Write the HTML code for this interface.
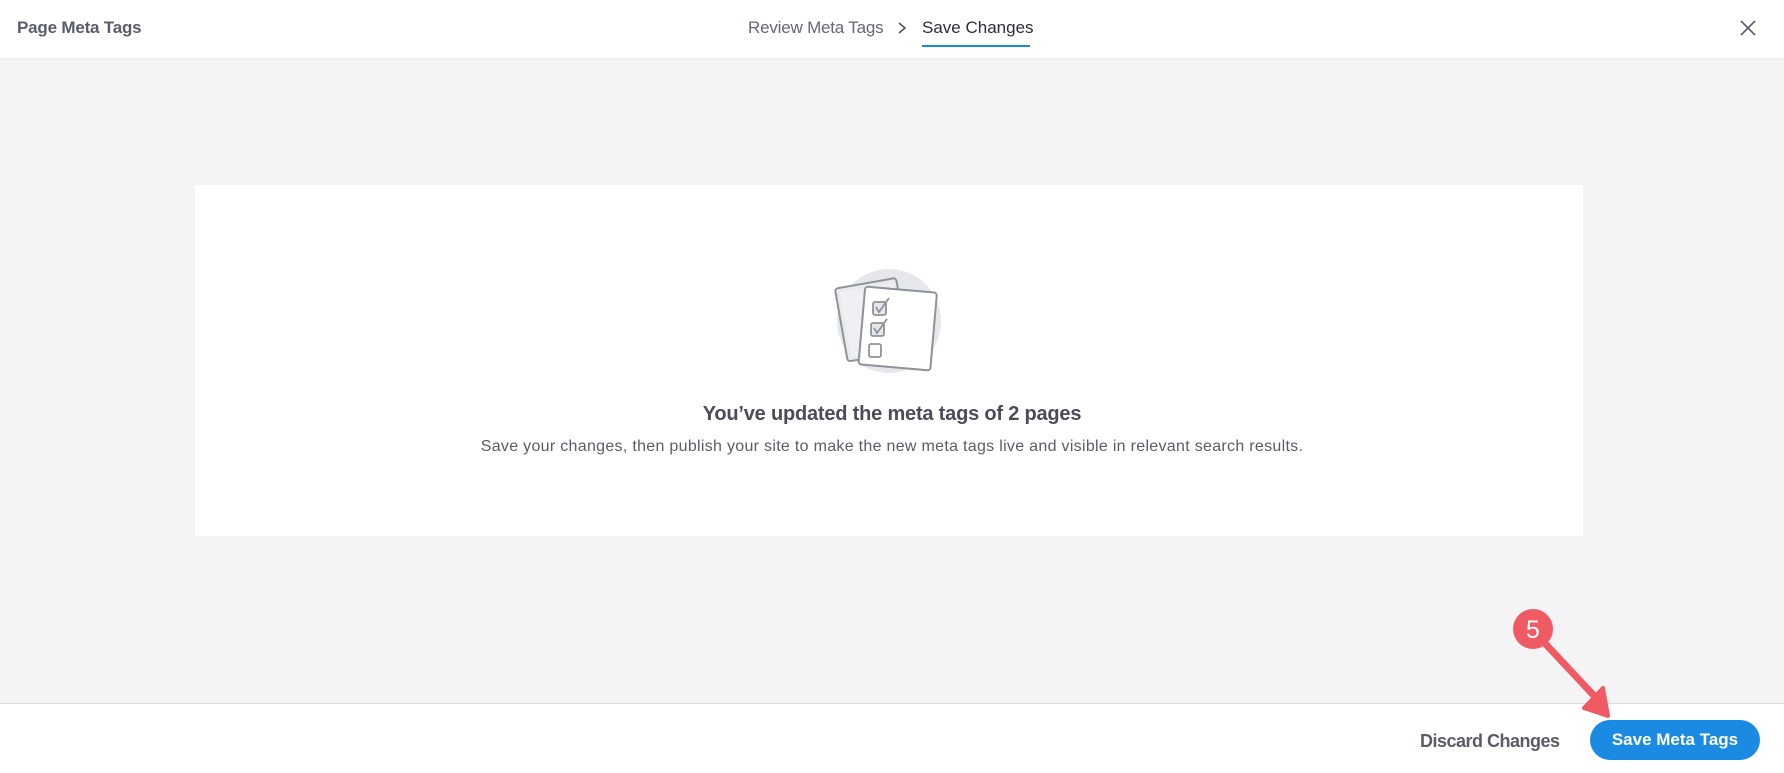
<!DOCTYPE html>
<html><head><meta charset="utf-8"><style>
*{margin:0;padding:0;box-sizing:border-box}
body{width:1784px;height:773px;background:#f4f4f6;font-family:"Liberation Sans",sans-serif;position:relative;overflow:hidden;color:#3b3d4a}
.hdr{position:absolute;left:0;top:0;width:1784px;height:59px;background:#fff;border-bottom:1px solid #ececee}
.t{position:absolute;white-space:nowrap}
.card{position:absolute;left:195px;top:185px;width:1388px;height:351px;background:#fff}
.ftr{position:absolute;left:0;top:703px;width:1784px;height:70px;background:#fff;border-top:1px solid #dcdcdf}
.btn{position:absolute;left:1590px;top:720px;width:170px;height:40px;border-radius:20px;background:#1a8ae3;color:#fff;font-weight:bold;font-size:17px;text-align:center;line-height:40px}
</style></head><body>
<div class="hdr"></div>
<div class="t" style="left:17px;top:18px;font-size:17px;color:#5a5d6b;font-weight:bold;letter-spacing:-0.2px">Page Meta Tags</div>
<div class="t" style="left:748px;top:18px;font-size:17px;color:#656877;letter-spacing:-0.2px">Review Meta Tags</div>
<svg style="position:absolute;left:896px;top:20px" width="12" height="16"><path d="M3 3 L9 8 L3 13" fill="none" stroke="#555" stroke-width="1.6"/></svg>
<div class="t" style="left:922px;top:18px;font-size:17px;color:#2c2e38">Save Changes</div>
<div style="position:absolute;left:922px;top:45px;width:108px;height:2px;background:#1a8ae3"></div>
<svg style="position:absolute;left:1738px;top:18px" width="20" height="20"><path d="M3 3 L17 17 M17 3 L3 17" stroke="#5a5d6a" stroke-width="1.6"/></svg>

<div class="card"></div>
<svg style="position:absolute;left:830px;top:265px" width="120" height="115" viewBox="0 0 120 115">
<circle cx="59" cy="56" r="52" fill="#e5e7ea"/>
<g transform="rotate(-10 40 50)"><rect x="10" y="18" width="62" height="74" rx="3" fill="#e8eaed" stroke="#8d9399" stroke-width="2"/><rect x="14" y="22" width="54" height="66" fill="#eef0f2"/></g>
<g transform="rotate(5 62 60)"><rect x="32" y="24" width="72" height="78" rx="3" fill="#fff" stroke="#8d9399" stroke-width="2"/></g>
<rect x="43" y="37" width="13" height="13" rx="2" fill="#e5e7ea" stroke="#8d9399" stroke-width="1.8"/>
<path d="M46 42 L49 47 L59 33" fill="none" stroke="#8d9399" stroke-width="1.8"/>
<rect x="41" y="58" width="13" height="13" rx="2" fill="#e5e7ea" stroke="#8d9399" stroke-width="1.8"/>
<path d="M44 63 L47 68 L57 54" fill="none" stroke="#8d9399" stroke-width="1.8"/>
<rect x="39" y="79" width="12" height="13" rx="2" fill="#fff" stroke="#8d9399" stroke-width="1.8"/>
</svg>
<div class="t" style="left:0;width:1784px;text-align:center;top:403px;font-size:20px;font-weight:bold;color:#4a4c58;letter-spacing:-0.2px">You’ve updated the meta tags of 2 pages</div>
<div class="t" style="left:0;width:1784px;text-align:center;top:438px;font-size:16px;color:#5a5c68;letter-spacing:0.3px">Save your changes, then publish your site to make the new meta tags live and visible in relevant search results.</div>

<div class="ftr"></div>
<div class="t" style="left:1420px;top:731px;font-size:18px;color:#5a5c68;font-weight:bold;letter-spacing:-0.5px">Discard Changes</div>
<div class="btn">Save Meta Tags</div>
<svg style="position:absolute;left:1500px;top:600px" width="130" height="125">
<path d="M40 38 L98 100" stroke="#f05a63" stroke-width="7" stroke-linecap="round"/>
<path d="M84 108 L108 116 L103 88 Z" fill="#f05a63" stroke="#f05a63" stroke-width="4" stroke-linejoin="round"/>
<circle cx="33" cy="29" r="20" fill="#f05a63"/>
<text x="33" y="38" text-anchor="middle" font-family="Liberation Sans" font-size="25" fill="#fff">5</text>
</svg>
</body></html>
